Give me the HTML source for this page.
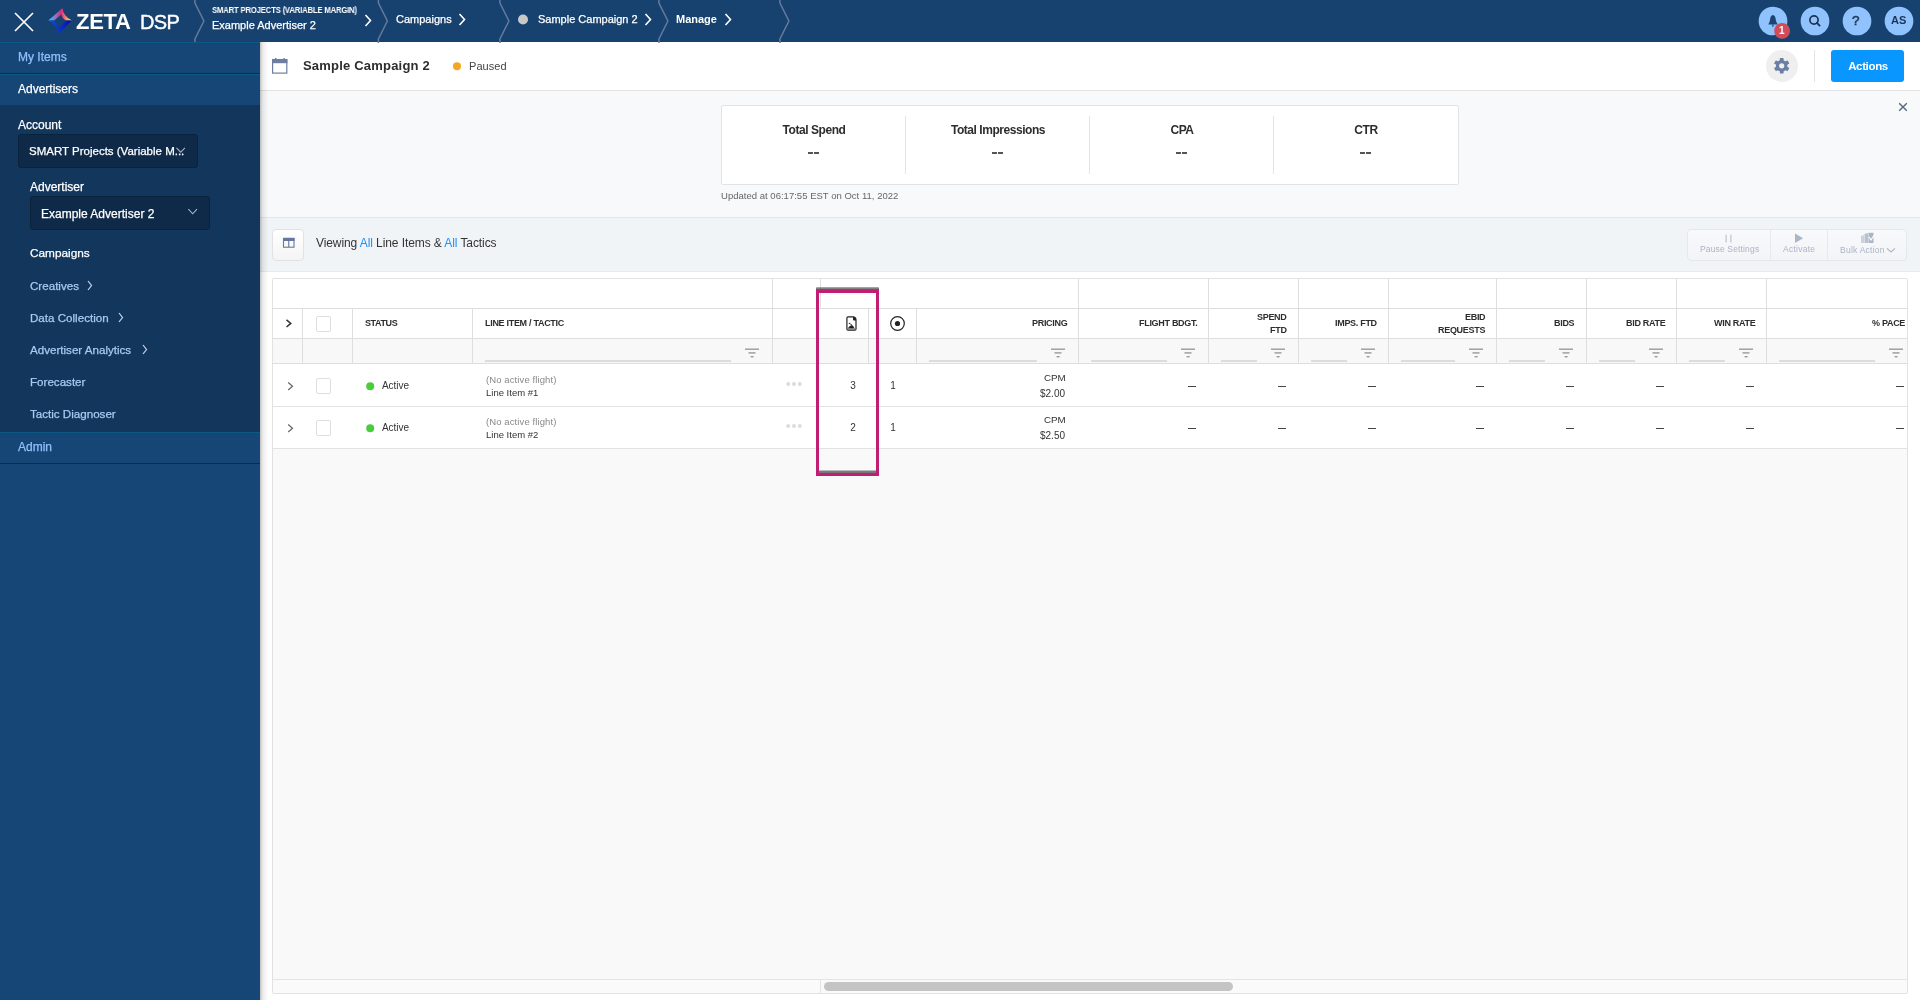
<!DOCTYPE html>
<html><head><meta charset="utf-8">
<style>
*{margin:0;padding:0;box-sizing:border-box}
html,body{width:1920px;height:1000px;overflow:hidden;font-family:"Liberation Sans",sans-serif;background:#f8f8f8;position:relative}
.a{position:absolute}
.t{position:absolute;white-space:nowrap;line-height:1;will-change:transform}
svg{position:absolute;overflow:visible}
.sb{-webkit-text-stroke:0.25px currentColor}
</style></head>
<body>
<div class="a" style="left:260px;top:42px;width:1660px;height:958px;background:#ffffff;"></div>
<div class="a" style="left:260px;top:42px;width:1660px;height:48px;background:#ffffff;"></div>
<div class="a" style="left:260px;top:90px;width:1660px;height:1px;background:#e2e2e2;"></div>
<div class="a" style="left:260px;top:91px;width:1660px;height:126px;background:#f8f9fb;"></div>
<div class="a" style="left:260px;top:217px;width:1660px;height:1px;background:#e3e6ea;"></div>
<div class="a" style="left:260px;top:218px;width:1660px;height:53px;background:#f1f4f7;"></div>
<div class="a" style="left:260px;top:271px;width:1660px;height:1px;background:#e6e9ed;"></div>
<svg style="left:270px;top:56px" width="20" height="20">
<rect x="2.6" y="3.6" width="14.2" height="13.5" fill="none" stroke="#6c7ea2" stroke-width="1.2"/>
<rect x="2" y="3.2" width="15.4" height="4" fill="#6c7ea2"/>
<rect x="5" y="2" width="1.5" height="3" fill="#6c7ea2"/>
<rect x="13.4" y="2" width="1.5" height="3" fill="#6c7ea2"/>
</svg>
<div class="t" style="left:303px;top:58.91px;font-size:13px;color:#2d2d2d;font-weight:bold;letter-spacing:0.2px;">Sample Campaign 2</div>
<svg style="left:0;top:0" width="1" height="1"><circle cx="457" cy="66.2" r="4" fill="#f5a623"/></svg>
<div class="t" style="left:469px;top:60.77px;font-size:11px;color:#444;letter-spacing:0.05px;">Paused</div>
<svg style="left:1766px;top:50px" width="32" height="32">
<circle cx="16" cy="16" r="16" fill="#efefef"/>
<g transform="translate(15.7,15.8)" fill="#6b7fa3">
<circle r="5.8"/>
<rect x="-1.85" y="-7.8" width="3.7" height="3.6" rx="0.5"/>
<rect x="-1.85" y="-7.8" width="3.7" height="3.6" rx="0.5" transform="rotate(60)"/>
<rect x="-1.85" y="-7.8" width="3.7" height="3.6" rx="0.5" transform="rotate(120)"/>
<rect x="-1.85" y="-7.8" width="3.7" height="3.6" rx="0.5" transform="rotate(180)"/>
<rect x="-1.85" y="-7.8" width="3.7" height="3.6" rx="0.5" transform="rotate(240)"/>
<rect x="-1.85" y="-7.8" width="3.7" height="3.6" rx="0.5" transform="rotate(300)"/>
<circle r="2.6" fill="#efefef"/>
</g></svg>
<div class="a" style="left:1814px;top:50px;width:1px;height:32px;background:#e4e4e4;"></div>
<div class="a" style="left:1831px;top:50px;width:73px;height:32px;background:#0996ff;border-radius:3px"></div>
<div class="t" style="left:1567.5px;width:600px;text-align:center;top:61.01px;font-size:11.5px;color:#fff;font-weight:bold;letter-spacing:-0.35px;">Actions</div>
<svg style="left:1897px;top:101px" width="12" height="12"><path d="M2.2 2.2 L9.8 9.8 M9.8 2.2 L2.2 9.8" stroke="#56667f" stroke-width="1.4"/></svg>
<div class="a" style="left:721px;top:105px;width:738px;height:80px;background:#fff;border:1px solid #e3e3e3;border-radius:2px"></div>
<div class="a" style="left:905px;top:116px;width:1px;height:58px;background:#e4e4e4;"></div>
<div class="a" style="left:1089px;top:116px;width:1px;height:58px;background:#e4e4e4;"></div>
<div class="a" style="left:1273px;top:116px;width:1px;height:58px;background:#e4e4e4;"></div>
<div class="t" style="left:513.5px;width:600px;text-align:center;top:124.24px;font-size:12px;color:#2d2d2d;font-weight:bold;letter-spacing:-0.45px;">Total Spend</div>
<div class="a" style="left:808.0px;top:152px;width:4.5px;height:2px;background:#555;"></div>
<div class="a" style="left:814.3px;top:152px;width:4.5px;height:2px;background:#555;"></div>
<div class="t" style="left:697.5px;width:600px;text-align:center;top:124.24px;font-size:12px;color:#2d2d2d;font-weight:bold;letter-spacing:-0.45px;">Total Impressions</div>
<div class="a" style="left:992.0px;top:152px;width:4.5px;height:2px;background:#555;"></div>
<div class="a" style="left:998.3px;top:152px;width:4.5px;height:2px;background:#555;"></div>
<div class="t" style="left:881.5px;width:600px;text-align:center;top:124.24px;font-size:12px;color:#2d2d2d;font-weight:bold;letter-spacing:-0.45px;">CPA</div>
<div class="a" style="left:1176.0px;top:152px;width:4.5px;height:2px;background:#555;"></div>
<div class="a" style="left:1182.3px;top:152px;width:4.5px;height:2px;background:#555;"></div>
<div class="t" style="left:1065.5px;width:600px;text-align:center;top:124.24px;font-size:12px;color:#2d2d2d;font-weight:bold;letter-spacing:-0.45px;">CTR</div>
<div class="a" style="left:1360.0px;top:152px;width:4.5px;height:2px;background:#555;"></div>
<div class="a" style="left:1366.3px;top:152px;width:4.5px;height:2px;background:#555;"></div>
<div class="t" style="left:721px;top:190.96px;font-size:9.5px;color:#666;letter-spacing:0.02px;">Updated at 06:17:55 EST on Oct 11, 2022</div>
<div class="a" style="left:272px;top:229px;width:32px;height:32px;background:linear-gradient(#ffffff,#f4f4f4);border:1px solid #e2e2e2;border-radius:4px"></div>
<svg style="left:282px;top:237px" width="14" height="12">
<rect x="1.5" y="1.5" width="10.5" height="8.7" fill="none" stroke="#6477a0" stroke-width="1.1"/>
<rect x="1" y="0.8" width="11.5" height="3.2" fill="#6477a0"/>
<rect x="6.2" y="2" width="1.1" height="8" fill="#6477a0"/>
</svg>
<div class="t" style="left:316px;top:237.19px;font-size:12px;color:#333;letter-spacing:-0.09px;">Viewing <span style="color:#1a8fff">All</span> Line Items &amp; <span style="color:#1a8fff">All</span> Tactics</div>
<div class="a" style="left:1687px;top:229px;width:220px;height:32px;background:linear-gradient(#f8f9fb,#f2f4f7);border:1px solid #e4e7ec;border-radius:4px"></div>
<div class="a" style="left:1770px;top:230px;width:1px;height:30px;background:#e6e9ee;"></div>
<div class="a" style="left:1827px;top:230px;width:1px;height:30px;background:#e6e9ee;"></div>
<svg style="left:1680px;top:225px" width="240" height="40">
<rect x="45.3" y="9.6" width="1.7" height="7.8" fill="#cdd3dc"/>
<rect x="50" y="9.6" width="1.7" height="7.8" fill="#cdd3dc"/>
<path d="M115 8.6 L123.1 13.3 L115 18 Z" fill="#aab5c8"/>
<path d="M181 11 L184 10 L184 18 L181 18 Z" fill="#cdd3dc"/>
<path d="M184.5 9 L188 8 L188 18 L184.5 18 Z" fill="#b9c1cf"/>
<path d="M188.5 7.8 L193.5 7.8 L193.5 18 L188.5 18 Z" fill="#aab5c8"/>
<path d="M189 12 L191 15 L195 9" stroke="#fff" stroke-width="1.2" fill="none"/>
<path d="M207 23.4 L211 27 L215 23.4" stroke="#aab5c8" stroke-width="1.1" fill="none"/>
</svg>
<div class="t" style="left:1699.8px;top:244.90px;font-size:8.5px;color:#abb4c5;letter-spacing:0.15px;">Pause Settings</div>
<div class="t" style="left:1783px;top:244.90px;font-size:8.5px;color:#abb4c5;letter-spacing:0.25px;">Activate</div>
<div class="t" style="left:1840.2px;top:246.09px;font-size:8.5px;color:#abb4c5;letter-spacing:0.25px;">Bulk Action</div>
<div class="a" style="left:272px;top:278px;width:1636px;height:716px;background:#f9f9f9;border:1px solid #e2e2e2;border-radius:2px"></div>
<div class="a" style="left:273px;top:279px;width:1634px;height:59px;background:#ffffff;"></div>
<div class="a" style="left:273px;top:339px;width:1634px;height:24px;background:#f8f8f8;"></div>
<div class="a" style="left:273px;top:364px;width:1634px;height:84px;background:#ffffff;"></div>
<div class="a" style="left:272px;top:308px;width:1635px;height:1px;background:#dedede;"></div>
<div class="a" style="left:272px;top:338px;width:1635px;height:1px;background:#dedede;"></div>
<div class="a" style="left:272px;top:363px;width:1635px;height:1px;background:#dedede;"></div>
<div class="a" style="left:272px;top:406px;width:1635px;height:1px;background:#e2e2e2;"></div>
<div class="a" style="left:272px;top:448px;width:1635px;height:1px;background:#e2e2e2;"></div>
<div class="a" style="left:772px;top:279px;width:1px;height:29px;background:#dedede;"></div>
<div class="a" style="left:820px;top:279px;width:1px;height:29px;background:#dedede;"></div>
<div class="a" style="left:1078px;top:279px;width:1px;height:29px;background:#dedede;"></div>
<div class="a" style="left:1208px;top:279px;width:1px;height:29px;background:#dedede;"></div>
<div class="a" style="left:1298px;top:279px;width:1px;height:29px;background:#dedede;"></div>
<div class="a" style="left:1388px;top:279px;width:1px;height:29px;background:#dedede;"></div>
<div class="a" style="left:1496px;top:279px;width:1px;height:29px;background:#dedede;"></div>
<div class="a" style="left:1586px;top:279px;width:1px;height:29px;background:#dedede;"></div>
<div class="a" style="left:1676px;top:279px;width:1px;height:29px;background:#dedede;"></div>
<div class="a" style="left:1766px;top:279px;width:1px;height:29px;background:#dedede;"></div>
<div class="a" style="left:302px;top:309px;width:1px;height:54px;background:#dedede;"></div>
<div class="a" style="left:352px;top:309px;width:1px;height:54px;background:#dedede;"></div>
<div class="a" style="left:472px;top:309px;width:1px;height:54px;background:#dedede;"></div>
<div class="a" style="left:772px;top:309px;width:1px;height:54px;background:#dedede;"></div>
<div class="a" style="left:868px;top:309px;width:1px;height:54px;background:#dedede;"></div>
<div class="a" style="left:916px;top:309px;width:1px;height:54px;background:#dedede;"></div>
<div class="a" style="left:1078px;top:309px;width:1px;height:54px;background:#dedede;"></div>
<div class="a" style="left:1208px;top:309px;width:1px;height:54px;background:#dedede;"></div>
<div class="a" style="left:1298px;top:309px;width:1px;height:54px;background:#dedede;"></div>
<div class="a" style="left:1388px;top:309px;width:1px;height:54px;background:#dedede;"></div>
<div class="a" style="left:1496px;top:309px;width:1px;height:54px;background:#dedede;"></div>
<div class="a" style="left:1586px;top:309px;width:1px;height:54px;background:#dedede;"></div>
<div class="a" style="left:1676px;top:309px;width:1px;height:54px;background:#dedede;"></div>
<div class="a" style="left:1766px;top:309px;width:1px;height:54px;background:#dedede;"></div>
<div class="a" style="left:272px;top:979px;width:1635px;height:1px;background:#e4e4e4;"></div>
<div class="a" style="left:273px;top:980px;width:1634px;height:13px;background:#fafafa;"></div>
<div class="a" style="left:820px;top:980px;width:1px;height:13px;background:#e4e4e4;"></div>
<div class="a" style="left:824px;top:982px;width:409px;height:8.5px;background:#c4c4c4;border-radius:5px"></div>
<svg style="left:0;top:0" width="1920" height="1000">
<path d="M286.5 319.8 L290.8 323.4 L286.5 327" stroke="#333" stroke-width="1.5" fill="none"/>
<path d="M288.2 382.5 L292.5 386.2 L288.2 390" stroke="#666" stroke-width="1.2" fill="none"/>
<path d="M288.2 424.5 L292.5 428.2 L288.2 432" stroke="#666" stroke-width="1.2" fill="none"/>
<circle cx="370.2" cy="386.2" r="4" fill="#4ccb3b"/>
<circle cx="370.2" cy="428.2" r="4" fill="#4ccb3b"/>
<g fill="#dcdcdc">
<circle cx="788.2" cy="384" r="2"/><circle cx="794" cy="384" r="2"/><circle cx="799.8" cy="384" r="2"/>
<circle cx="788.2" cy="426" r="2"/><circle cx="794" cy="426" r="2"/><circle cx="799.8" cy="426" r="2"/>
</g>
<!-- image-file icon -->
<path d="M846.9 318 Q846.9 316.9 848 316.9 L853.5 316.9 Q856 317.3 856 320.2 L856 329 Q856 330.1 854.9 330.1 L848 330.1 Q846.9 330.1 846.9 329 Z" fill="none" stroke="#222" stroke-width="1.2"/>
<path d="M853 317 L853 319.6 Q853 320.6 854 320.6 L856 320.6 L856 319.5 Q855.6 317.4 853 317 Z" fill="#222"/>
<path d="M847.6 328.6 Q849.6 325.8 851.7 325 Q853.3 325.4 854.6 328.6 Z" fill="#222"/>
<path d="M849.5 323.5 L852 325" stroke="#222" stroke-width="0.8"/>
<circle cx="849.4" cy="323.4" r="0.65" fill="#222"/>
<rect x="847.5" y="328.4" width="8" height="1.2" fill="#777"/>
<!-- target icon -->
<circle cx="897.5" cy="323.5" r="6.8" fill="none" stroke="#222" stroke-width="1.2"/>
<circle cx="897.5" cy="323.5" r="2.6" fill="#222"/>
</svg>
<div class="a" style="left:315.5px;top:316px;width:15.5px;height:15.5px;background:#fff;border:1.5px solid #dedede;border-radius:2px"></div>
<div class="a" style="left:315.5px;top:378px;width:15.5px;height:15.5px;background:#fff;border:1.5px solid #dedede;border-radius:2px"></div>
<div class="a" style="left:315.5px;top:420px;width:15.5px;height:15.5px;background:#fff;border:1.5px solid #dedede;border-radius:2px"></div>
<div class="t" style="left:365px;top:318.83px;font-size:9px;color:#2d2d2d;font-weight:bold;letter-spacing:-0.4px;">STATUS</div>
<div class="t" style="left:485.3px;top:318.83px;font-size:9px;color:#2d2d2d;font-weight:bold;letter-spacing:-0.3px;">LINE ITEM / TACTIC</div>
<div class="t" style="right:853px;top:319.03px;font-size:9px;color:#2d2d2d;font-weight:bold;letter-spacing:-0.3px;">PRICING</div>
<div class="t" style="right:723px;top:319.03px;font-size:9px;color:#2d2d2d;font-weight:bold;letter-spacing:-0.3px;">FLIGHT BDGT.</div>
<div class="t" style="right:633.3px;top:312.83px;font-size:9px;color:#2d2d2d;font-weight:bold;letter-spacing:-0.3px;">SPEND</div>
<div class="t" style="right:633.3px;top:326.03px;font-size:9px;color:#2d2d2d;font-weight:bold;letter-spacing:-0.3px;">FTD</div>
<div class="t" style="right:543.2px;top:319.03px;font-size:9px;color:#2d2d2d;font-weight:bold;letter-spacing:-0.3px;">IMPS. FTD</div>
<div class="t" style="right:435.20000000000005px;top:312.83px;font-size:9px;color:#2d2d2d;font-weight:bold;letter-spacing:-0.3px;">EBID</div>
<div class="t" style="right:435.20000000000005px;top:326.03px;font-size:9px;color:#2d2d2d;font-weight:bold;letter-spacing:-0.3px;">REQUESTS</div>
<div class="t" style="right:345.29999999999995px;top:319.03px;font-size:9px;color:#2d2d2d;font-weight:bold;letter-spacing:-0.3px;">BIDS</div>
<div class="t" style="right:255px;top:319.03px;font-size:9px;color:#2d2d2d;font-weight:bold;letter-spacing:-0.3px;">BID RATE</div>
<div class="t" style="right:165px;top:319.03px;font-size:9px;color:#2d2d2d;font-weight:bold;letter-spacing:-0.3px;">WIN RATE</div>
<div class="t" style="right:15px;top:319.03px;font-size:9px;color:#2d2d2d;font-weight:bold;letter-spacing:-0.3px;">% PACE</div>
<div class="a" style="left:485px;top:360px;width:246px;height:2px;background:#dcdcdc;"></div>
<div class="a" style="left:929px;top:360px;width:108px;height:2px;background:#dcdcdc;"></div>
<div class="a" style="left:1091px;top:360px;width:76px;height:2px;background:#dcdcdc;"></div>
<div class="a" style="left:1221px;top:360px;width:36px;height:2px;background:#dcdcdc;"></div>
<div class="a" style="left:1311px;top:360px;width:36px;height:2px;background:#dcdcdc;"></div>
<div class="a" style="left:1401px;top:360px;width:54px;height:2px;background:#dcdcdc;"></div>
<div class="a" style="left:1509px;top:360px;width:36px;height:2px;background:#dcdcdc;"></div>
<div class="a" style="left:1599px;top:360px;width:36px;height:2px;background:#dcdcdc;"></div>
<div class="a" style="left:1689px;top:360px;width:36px;height:2px;background:#dcdcdc;"></div>
<div class="a" style="left:1779px;top:360px;width:96px;height:2px;background:#dcdcdc;"></div>
<svg style="left:0;top:0" width="1920" height="1000"><g fill="#9a9a9a"><rect x="745" y="348.5" width="14" height="1.4"/><rect x="748.5" y="352.2" width="7" height="1.4"/><rect x="750.6" y="356" width="3" height="1.4"/><rect x="1051" y="348.5" width="14" height="1.4"/><rect x="1054.5" y="352.2" width="7" height="1.4"/><rect x="1056.6" y="356" width="3" height="1.4"/><rect x="1181" y="348.5" width="14" height="1.4"/><rect x="1184.5" y="352.2" width="7" height="1.4"/><rect x="1186.6" y="356" width="3" height="1.4"/><rect x="1271" y="348.5" width="14" height="1.4"/><rect x="1274.5" y="352.2" width="7" height="1.4"/><rect x="1276.6" y="356" width="3" height="1.4"/><rect x="1361" y="348.5" width="14" height="1.4"/><rect x="1364.5" y="352.2" width="7" height="1.4"/><rect x="1366.6" y="356" width="3" height="1.4"/><rect x="1469" y="348.5" width="14" height="1.4"/><rect x="1472.5" y="352.2" width="7" height="1.4"/><rect x="1474.6" y="356" width="3" height="1.4"/><rect x="1559" y="348.5" width="14" height="1.4"/><rect x="1562.5" y="352.2" width="7" height="1.4"/><rect x="1564.6" y="356" width="3" height="1.4"/><rect x="1649" y="348.5" width="14" height="1.4"/><rect x="1652.5" y="352.2" width="7" height="1.4"/><rect x="1654.6" y="356" width="3" height="1.4"/><rect x="1739" y="348.5" width="14" height="1.4"/><rect x="1742.5" y="352.2" width="7" height="1.4"/><rect x="1744.6" y="356" width="3" height="1.4"/><rect x="1889" y="348.5" width="14" height="1.4"/><rect x="1892.5" y="352.2" width="7" height="1.4"/><rect x="1894.6" y="356" width="3" height="1.4"/></g></svg>
<div class="t" style="left:382px;top:381.20px;font-size:10px;color:#333;letter-spacing:-0.05px;">Active</div>
<div class="t" style="left:485.8px;top:374.56px;font-size:9.5px;color:#888;letter-spacing:0.1px;">(No active flight)</div>
<div class="t" style="left:486.2px;top:387.96px;font-size:9.5px;color:#333;">Line Item #1</div>
<div class="t" style="left:553.3px;width:600px;text-align:center;top:381.20px;font-size:10px;color:#333;">3</div>
<div class="t" style="left:593px;width:600px;text-align:center;top:381.20px;font-size:10px;color:#333;">1</div>
<div class="t" style="right:854.2px;top:373.23px;font-size:9.8px;color:#333;letter-spacing:-0.1px;">CPM</div>
<div class="t" style="right:854.5px;top:388.70px;font-size:10px;color:#333;">$2.00</div>
<div class="a" style="left:1188px;top:385.6px;width:8px;height:1.2px;background:#444;"></div>
<div class="a" style="left:1277.7px;top:385.6px;width:8px;height:1.2px;background:#444;"></div>
<div class="a" style="left:1367.7px;top:385.6px;width:8px;height:1.2px;background:#444;"></div>
<div class="a" style="left:1476px;top:385.6px;width:8px;height:1.2px;background:#444;"></div>
<div class="a" style="left:1566px;top:385.6px;width:8px;height:1.2px;background:#444;"></div>
<div class="a" style="left:1656px;top:385.6px;width:8px;height:1.2px;background:#444;"></div>
<div class="a" style="left:1746px;top:385.6px;width:8px;height:1.2px;background:#444;"></div>
<div class="a" style="left:1896px;top:385.6px;width:8px;height:1.2px;background:#444;"></div>
<div class="t" style="left:382px;top:423.20px;font-size:10px;color:#333;letter-spacing:-0.05px;">Active</div>
<div class="t" style="left:485.8px;top:416.56px;font-size:9.5px;color:#888;letter-spacing:0.1px;">(No active flight)</div>
<div class="t" style="left:486.2px;top:429.96px;font-size:9.5px;color:#333;">Line Item #2</div>
<div class="t" style="left:553.3px;width:600px;text-align:center;top:423.20px;font-size:10px;color:#333;">2</div>
<div class="t" style="left:593px;width:600px;text-align:center;top:423.20px;font-size:10px;color:#333;">1</div>
<div class="t" style="right:854.2px;top:415.23px;font-size:9.8px;color:#333;letter-spacing:-0.1px;">CPM</div>
<div class="t" style="right:854.5px;top:430.70px;font-size:10px;color:#333;">$2.50</div>
<div class="a" style="left:1188px;top:427.6px;width:8px;height:1.2px;background:#444;"></div>
<div class="a" style="left:1277.7px;top:427.6px;width:8px;height:1.2px;background:#444;"></div>
<div class="a" style="left:1367.7px;top:427.6px;width:8px;height:1.2px;background:#444;"></div>
<div class="a" style="left:1476px;top:427.6px;width:8px;height:1.2px;background:#444;"></div>
<div class="a" style="left:1566px;top:427.6px;width:8px;height:1.2px;background:#444;"></div>
<div class="a" style="left:1656px;top:427.6px;width:8px;height:1.2px;background:#444;"></div>
<div class="a" style="left:1746px;top:427.6px;width:8px;height:1.2px;background:#444;"></div>
<div class="a" style="left:1896px;top:427.6px;width:8px;height:1.2px;background:#444;"></div>
<div class="a" style="left:816px;top:287px;width:63px;height:3px;background:linear-gradient(rgba(90,90,90,0.45),rgba(70,70,70,0.95));border-radius:1px 1px 0 0"></div>
<div class="a" style="left:816px;top:290px;width:63px;height:186px;background:transparent;border:3px solid #c11d74"></div>
<div class="a" style="left:819px;top:469.6px;width:57px;height:3.2px;background:linear-gradient(rgba(100,100,100,0.2),rgba(100,100,100,0.85) 50%,rgba(110,110,110,0.95));"></div>
<!-- HEADER -->
<div class="a" style="left:0;top:0;width:1920px;height:42px;background:#17426f"></div>
<svg style="left:0;top:0" width="1920" height="42">
  <!-- close X -->
  <path d="M15 13 L33 31 M33 13 L15 31" stroke="#fff" stroke-width="1.7" fill="none"/>
  <!-- logo diamond -->
  <defs>
    <linearGradient id="lg1" gradientUnits="userSpaceOnUse" x1="48" y1="0" x2="72" y2="0">
      <stop offset="0" stop-color="#2ccaff"/><stop offset="0.3" stop-color="#8a78c8"/><stop offset="0.55" stop-color="#d92c7c"/><stop offset="0.75" stop-color="#f08a70"/><stop offset="1" stop-color="#fff645"/>
    </linearGradient>
    <linearGradient id="lg2" gradientUnits="userSpaceOnUse" x1="48" y1="0" x2="72" y2="0">
      <stop offset="0" stop-color="#0a58e0"/><stop offset="0.5" stop-color="#0a30c8"/><stop offset="1" stop-color="#0a06b0"/>
    </linearGradient>
  </defs>
  <path d="M48.2 20.6 L62.4 8.2 Q63.2 16 72 20.6 L66.4 20.6 Q62 18.5 61.4 14.2 L54.2 20.6 Z" fill="url(#lg1)"/>
  <path d="M48.2 20.6 L54.2 20.6 L59 27.4 L66.4 20.6 L72 20.6 L58.4 33.8 Q57.5 24.5 48.2 20.6 Z" fill="url(#lg2)"/>
  <!-- breadcrumb separators -->
  <g stroke="#677b9c" stroke-width="1.5" fill="none" stroke-linejoin="round">
    <path d="M194.9 -1 L194.9 3 L203.9 21 L194.9 39 L194.9 43"/>
    <path d="M378.4 -1 L378.4 3 L387.4 21 L378.4 39 L378.4 43"/>
    <path d="M499.9 -1 L499.9 3 L508.9 21 L499.9 39 L499.9 43"/>
    <path d="M658.9 -1 L658.9 3 L667.9 21 L658.9 39 L658.9 43"/>
    <path d="M779.9 -1 L779.9 3 L788.9 21 L779.9 39 L779.9 43"/>
  </g>
  <!-- breadcrumb chevrons -->
  <g stroke="#fff" stroke-width="1.6" fill="none">
    <path d="M365.5 15 L370.5 20.5 L365.5 26"/>
    <path d="M459.5 14 L464.5 19.5 L459.5 25"/>
    <path d="M645.5 14 L650.5 19.5 L645.5 25"/>
    <path d="M725.5 14 L730.5 19.5 L725.5 25"/>
  </g>
  <circle cx="523" cy="19.5" r="5" fill="#c8c8c8"/>
</svg>
<div class="t" style="left:76px;top:11px;font-size:22px;font-weight:bold;color:#fff;letter-spacing:-0.3px">ZETA</div>
<div class="t" style="left:140px;top:12px;font-size:20px;color:#fff;letter-spacing:-0.6px;-webkit-text-stroke:0.4px #fff">DSP</div>
<div class="t" style="left:212px;top:5.9px;font-size:8.6px;font-weight:bold;color:#fff;letter-spacing:-0.2px;transform:scaleX(0.897);transform-origin:0 0">SMART PROJECTS (VARIABLE MARGIN)</div>
<div class="t sb" style="left:212px;top:20px;font-size:11px;color:#fff">Example Advertiser 2</div>
<div class="t sb" style="left:396px;top:13.7px;font-size:11px;color:#fff">Campaigns</div>
<div class="t sb" style="left:538px;top:13.7px;font-size:11px;color:#fff">Sample Campaign 2</div>
<div class="t" style="left:676px;top:13.7px;font-size:11px;font-weight:bold;color:#fff">Manage</div>
<!-- right header icons -->
<svg style="left:1740px;top:0" width="180" height="42">
  <circle cx="33" cy="21" r="14.35" fill="#90c2fd"/>
  <circle cx="75" cy="21" r="14.35" fill="#90c2fd"/>
  <circle cx="117" cy="21" r="14.35" fill="#90c2fd"/>
  <circle cx="159" cy="21" r="14.35" fill="#90c2fd"/>
  <!-- bell -->
  <path d="M28.3 24.6 Q29.6 22.6 30 20 L30.4 17.6 Q31 15.2 32.9 15 Q34.8 15.2 35.4 17.6 L35.8 20 Q36.2 22.6 37.8 24.6 Z" fill="#1b4470"/>
  <rect x="32.2" y="24.6" width="1.4" height="2" fill="#1b4470"/>
  <!-- search -->
  <circle cx="74" cy="20" r="4.1" stroke="#1b3553" stroke-width="1.7" fill="none"/>
  <path d="M76.9 22.9 L79.6 25.6" stroke="#1b3553" stroke-width="1.9" stroke-linecap="round"/>
  <!-- badge -->
  <circle cx="42.1" cy="30.9" r="7.9" fill="#d24b59"/>
</svg>
<div class="t" style="left:1779.3px;top:25.6px;font-size:10px;font-weight:bold;color:#fff">1</div>
<div class="t" style="left:1852.3px;top:14.3px;font-size:13.5px;color:#1b3553;-webkit-text-stroke:0.5px #1b3553">?</div>
<div class="t" style="left:1891px;top:14.6px;font-size:11px;font-weight:bold;color:#1b3553">AS</div>

<!-- SIDEBAR -->
<div class="a" style="left:0;top:42px;width:260px;height:958px;background:#164676"></div>
<div class="a" style="left:0;top:42px;width:260px;height:1px;background:#0b5a85"></div>
<div class="a" style="left:0;top:73px;width:260px;height:1px;background:#0d2b4a"></div>
<div class="a" style="left:0;top:74px;width:260px;height:1px;background:#0b5a85"></div>
<div class="a" style="left:0;top:105px;width:260px;height:327px;background:#13365d"></div>
<div class="a" style="left:0;top:432px;width:260px;height:1px;background:#0b5a85"></div>
<div class="a" style="left:0;top:463px;width:260px;height:1px;background:#0d2b4a"></div>
<div class="t sb" style="left:18px;top:51px;font-size:12px;color:#8fc1fc">My Items</div>
<div class="t sb" style="left:18px;top:83px;font-size:12px;color:#fff">Advertisers</div>
<div class="t sb" style="left:18px;top:119px;font-size:12px;color:#fff">Account</div>
<div class="a" style="left:18px;top:134px;width:180px;height:34px;background:#0f2a48;border:1px solid #0b223b;border-radius:3px"></div>
<div class="t sb" style="left:29px;top:146px;font-size:11.5px;color:#fff">SMART Projects (Variable M...</div>
<div class="t sb" style="left:30px;top:181px;font-size:12px;color:#fff">Advertiser</div>
<div class="a" style="left:30px;top:196px;width:180px;height:34px;background:#0f2a48;border:1px solid #0b223b;border-radius:3px"></div>
<div class="t sb" style="left:41px;top:208px;font-size:12px;color:#fff">Example Advertiser 2</div>
<svg style="left:0;top:0" width="260" height="1000">
  <path d="M176.5 147.8 L180.7 152.2 L184.9 147.8" stroke="#a9b4c3" stroke-width="1.1" fill="none"/>
  <path d="M188.4 209.2 L192.7 213.8 L197 209.2" stroke="#a9b4c3" stroke-width="1.1" fill="none"/>
  <g stroke="#c9d8ea" stroke-width="1.2" fill="none">
    <path d="M88 281 L91.5 285.5 L88 290"/>
    <path d="M119 313 L122.5 317.5 L119 322"/>
    <path d="M143 345 L146.5 349.5 L143 354"/>
  </g>
</svg>
<div class="t sb" style="left:30px;top:248.2px;font-size:11.8px;color:#fff">Campaigns</div>
<div class="t sb" style="left:30px;top:279.8px;font-size:11.6px;color:#a9cbf2">Creatives</div>
<div class="t sb" style="left:30px;top:312.3px;font-size:11.6px;color:#a9cbf2">Data Collection</div>
<div class="t sb" style="left:30px;top:344.1px;font-size:11.6px;color:#a9cbf2">Advertiser Analytics</div>
<div class="t sb" style="left:30px;top:376.1px;font-size:11.6px;color:#a9cbf2">Forecaster</div>
<div class="t sb" style="left:30px;top:408.1px;font-size:11.6px;color:#a9cbf2">Tactic Diagnoser</div>
<div class="t sb" style="left:18px;top:441px;font-size:12px;color:#8fc1fc">Admin</div>
<div class="a" style="left:260px;top:42px;width:8px;height:958px;background:linear-gradient(to right,rgba(0,0,0,0.24),rgba(0,0,0,0.08) 35%,rgba(0,0,0,0))"></div>
</body></html>
